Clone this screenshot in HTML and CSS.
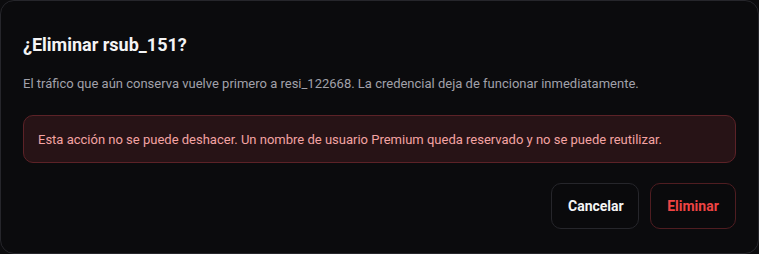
FILE: index.html
```html
<!DOCTYPE html>
<html lang="es">
<head>
<meta charset="utf-8">
<link rel="stylesheet" href="styles.css">
</head>
<body>
<div class="dialog">
  <h2 class="title">¿Eliminar rsub_151?</h2>
  <p class="desc">El tráfico que aún conserva vuelve primero a resi_122668. La credencial deja de funcionar inmediatamente.</p>
  <div class="alert">Esta acción no se puede deshacer. Un nombre de usuario Premium queda reservado y no se puede reutilizar.</div>
  <div class="actions">
    <button class="btn btn-cancel">Cancelar</button>
    <button class="btn btn-danger">Eliminar</button>
  </div>
</div>
</body>
</html>
```
FILE: styles.css
```css
html, body {
  margin: 0;
  padding: 0;
  background: #0c0c0e;
}
body {
  font-family: Roboto, "Liberation Sans", sans-serif;
  width: 759px;
  height: 254px;
}
.dialog {
  box-sizing: border-box;
  width: 759px;
  height: 254px;
  background: #0b0b0d;
  border: 1px solid #26262b;
  border-radius: 14px;
  padding: 31px 22px 24px;
  display: flex;
  flex-direction: column;
}
.title {
  margin: 0;
  font-size: 18px;
  line-height: 26px;
  font-weight: 700;
  color: #f4f4f5;
}
.desc {
  margin: 17px 0 0;
  font-size: 13px;
  line-height: 18px;
  color: #a1a1aa;
}
.alert {
  margin-top: 22px;
  box-sizing: border-box;
  height: 50px;
  display: flex;
  align-items: center;
  padding: 0 14px;
  border: 1px solid #5c2227;
  border-radius: 10px;
  background: #271316;
  color: #f4a3a3;
  font-size: 13px;
}
.actions {
  margin-top: 20px;
  display: flex;
  justify-content: flex-end;
  gap: 11px;
}
.btn {
  box-sizing: border-box;
  height: 46px;
  padding: 0 16px;
  border-radius: 10px;
  background: #0a0a0c;
  font-family: Roboto, "Liberation Sans", sans-serif;
  font-size: 14px;
  font-weight: 700;
}
.btn-cancel {
  width: 88px;
  border: 1px solid #26262b;
  color: #f4f4f5;
}
.btn-danger {
  width: 86px;
  border: 1px solid #4f1d21;
  color: #ef4444;
}
```
